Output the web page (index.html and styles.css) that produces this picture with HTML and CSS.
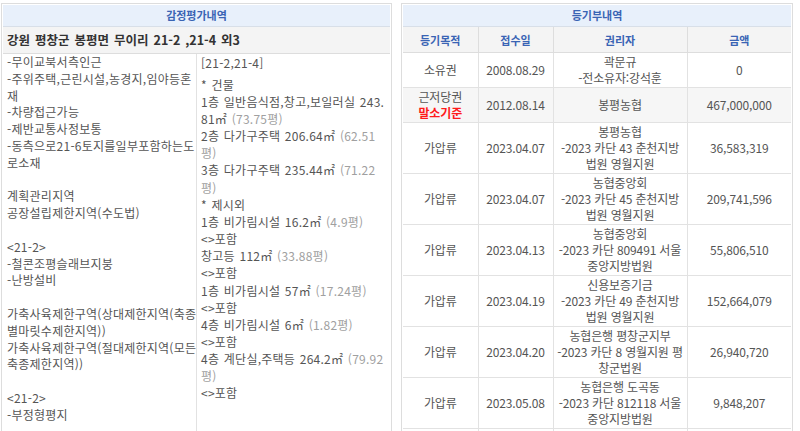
FILE: index.html
```html
<!DOCTYPE html>
<html lang="ko">
<head>
<meta charset="utf-8">
<title>감정평가내역 / 등기부내역</title>
<link rel="stylesheet" href="styles.css">
</head>
<body>
<div class="page">
  <section class="panel panel-left">
    <div class="ptitle">감정평가내역</div>
    <div class="addr">강원 평창군 봉평면 무이리 21-2 ,21-4 외3</div>
    <div class="cols">
      <div class="col col-desc">
        <div>-무이교북서측인근</div>
        <div>-주위주택,근린시설,농경지,임야등혼</div>
        <div>재</div>
        <div>-차량접근가능</div>
        <div>-제반교통사정보통</div>
        <div>-동측으로21-6토지를일부포함하는도</div>
        <div>로소재</div>
        <div class="blank"></div>
        <div>계획관리지역</div>
        <div>공장설립제한지역(수도법)</div>
        <div class="blank"></div>
        <div>&lt;21-2&gt;</div>
        <div>-철콘조평슬래브지붕</div>
        <div>-난방설비</div>
        <div class="blank"></div>
        <div>가축사육제한구역(상대제한지역(축종</div>
        <div>별마릿수제한지역))</div>
        <div>가축사육제한구역(절대제한지역(모든</div>
        <div>축종제한지역))</div>
        <div class="blank"></div>
        <div>&lt;21-2&gt;</div>
        <div>-부정형평지</div>
      </div>
      <div class="col col-bld">
        <div class="group">
          <div class="ghead">[21-2,21-4]</div>
          <div>* 건물</div>
          <div>1층 일반음식점,창고,보일러실 243.</div>
          <div>81㎡ <span class="py">(73.75평)</span></div>
          <div>2층 다가구주택 206.64㎡ <span class="py">(62.51</span></div>
          <div><span class="py">평)</span></div>
          <div>3층 다가구주택 235.44㎡ <span class="py">(71.22</span></div>
          <div><span class="py">평)</span></div>
          <div>* 제시외</div>
          <div>1층 비가림시설 16.2㎡ <span class="py">(4.9평)</span></div>
          <div>&lt;&gt;포함</div>
          <div>창고등 112㎡ <span class="py">(33.88평)</span></div>
          <div>&lt;&gt;포함</div>
          <div>1층 비가림시설 57㎡ <span class="py">(17.24평)</span></div>
          <div>&lt;&gt;포함</div>
          <div>4층 비가림시설 6㎡ <span class="py">(1.82평)</span></div>
          <div>&lt;&gt;포함</div>
          <div>4층 계단실,주택등 264.2㎡ <span class="py">(79.92</span></div>
          <div><span class="py">평)</span></div>
          <div>&lt;&gt;포함</div>
        </div>
        <div class="group">
          <div class="ghead">[21-2]</div>
          <div>* 건물</div>
        </div>
      </div>
    </div>
  </section>

  <section class="panel panel-right">
    <div class="ptitle">등기부내역</div>
    <table class="reg">
      <colgroup>
        <col class="c1"><col class="c2"><col class="c3"><col class="c4">
      </colgroup>
      <thead>
        <tr><th>등기목적</th><th>접수일</th><th>권리자</th><th>금액</th></tr>
      </thead>
      <tbody>
        <tr><td>소유권</td><td>2008.08.29</td><td>곽문규<br>-전소유자:강석훈</td><td>0</td></tr>
        <tr class="base"><td>근저당권<br><strong class="red">말소기준</strong></td><td>2012.08.14</td><td>봉평농협</td><td>467,000,000</td></tr>
        <tr><td>가압류</td><td>2023.04.07</td><td>봉평농협<br>-2023 카단 43 춘천지방<br>법원 영월지원</td><td>36,583,319</td></tr>
        <tr><td>가압류</td><td>2023.04.07</td><td>농협중앙회<br>-2023 카단 45 춘천지방<br>법원 영월지원</td><td>209,741,596</td></tr>
        <tr><td>가압류</td><td>2023.04.13</td><td>농협중앙회<br>-2023 카단 809491 서울<br>중앙지방법원</td><td>55,806,510</td></tr>
        <tr><td>가압류</td><td>2023.04.19</td><td>신용보증기금<br>-2023 카단 49 춘천지방<br>법원 영월지원</td><td>152,664,079</td></tr>
        <tr><td>가압류</td><td>2023.04.20</td><td>농협은행 평창군지부<br>-2023 카단 8 영월지원 평<br>창군법원</td><td>26,940,720</td></tr>
        <tr><td>가압류</td><td>2023.05.08</td><td>농협은행 도곡동<br>-2023 카단 812118 서울<br>중앙지방법원</td><td>9,848,207</td></tr>
        <tr><td>가압류</td><td>2023.05.10</td><td>농협은행<br>-2023 카단 813 서울<br>중앙지방법원</td><td>10,000,000</td></tr>
      </tbody>
    </table>
  </section>
</div>
</body>
</html>
```

FILE: styles.css
```css
html, body {
  margin: 0;
  padding: 0;
  background: #ffffff;
}

body {
  font-family: "Noto Sans CJK KR", "Noto Sans", sans-serif;
  font-size: 12px;
  color: #555555;
  overflow: hidden;
}

.page {
  display: flex;
  align-items: flex-start;
  gap: 9px;
  padding: 3px 0 0 1px;
}

.panel {
  box-sizing: border-box;
  border: 1px solid #dddddd;
  padding: 1px;
}

.panel-left {
  width: 391px;
}

.panel-right {
  width: 392px;
}

.ptitle {
  height: 21px;
  line-height: 21px;
  background: #e8f0fb;
  border-bottom: 1px solid #d8dfe8;
  color: #3a64b4;
  font-weight: bold;
  font-size: 11px;
  text-align: center;
}

.addr {
  height: 26px;
  line-height: 26px;
  background: #f4f4f4;
  border-bottom: 1px solid #dddddd;
  color: #333333;
  font-weight: bold;
  font-size: 12.5px;
  word-spacing: 1.5px;
  padding-left: 4px;
}

.cols {
  display: grid;
  grid-template-columns: 193px 1fr;
}

.col {
  white-space: nowrap;
  overflow: hidden;
  letter-spacing: 0.25px;
}

.col-desc {
  padding: 0 2px 0 4px;
  line-height: 16.8px;
}

.col-bld {
  border-left: 1px solid #e2e2e2;
  padding: 0 2px 0 4px;
  line-height: 17.15px;
  word-spacing: 1px;
}

.blank {
  height: 16.8px;
}

.ghead {
  margin-bottom: 4.5px;
}

.group + .group {
  margin-top: 28px;
}

.py {
  color: #a0a0a0;
}

.reg {
  width: 100%;
  border-collapse: collapse;
  table-layout: fixed;
}

.reg .c1 { width: 75px; }
.reg .c2 { width: 75px; }
.reg .c3 { width: 134px; }
.reg .c4 { width: 104px; }

.reg th {
  height: 25px;
  background: #f4f4f4;
  color: #3a64b4;
  font-weight: bold;
  font-size: 11px;
  border: 1px solid #dddddd;
  border-top: none;
  padding: 0;
}

.reg td {
  border: 1px solid #e2e2e2;
  padding: 1px 2px;
  line-height: 16px;
  text-align: center;
  white-space: nowrap;
  letter-spacing: -0.15px;
}

.reg tr > :first-child { border-left: none; }
.reg tr > :last-child { border-right: none; }

.reg tr.base td {
  background: #f6f6f6;
}

.red {
  color: #ff1a1a;
  font-weight: bold;
}
```
